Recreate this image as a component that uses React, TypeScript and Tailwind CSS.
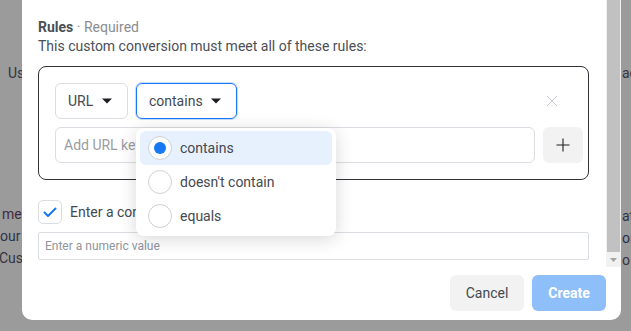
import React from "react";

function Caret() {
  return (
    <svg width="10" height="6" viewBox="0 0 10 6" className="shrink-0">
      <path d="M0 0.5 L10 0.5 L5 5.5 Z" fill="#1c1e21" />
    </svg>
  );
}

function Radio({ checked }: { checked?: boolean }) {
  return (
    <div className="w-[24px] h-[24px] rounded-full border border-[#ced0d4] bg-white flex items-center justify-center shrink-0">
      {checked && <div className="w-[12px] h-[12px] rounded-full bg-[#1877f2]" />}
    </div>
  );
}

export default function App() {
  return (
    <div className="relative w-[631px] h-[331px] overflow-hidden bg-[#9b9b9b] font-['Roboto','Noto_Sans',sans-serif]">
      {/* page text behind the overlay */}
      <div className="absolute left-[8px] top-[64px] text-[14px] leading-[19px] text-[#343440]">Us</div>
      <div className="absolute left-[622px] top-[64px] text-[14px] leading-[19px] text-[#343440]">ac</div>
      <div className="absolute left-[2px] top-[203px] text-[14px] leading-[22px] text-[#3f2c40]">me</div>
      <div className="absolute left-[0px] top-[225px] text-[14px] leading-[22px] text-[#2c3448]">our</div>
      <div className="absolute left-[-1px] top-[247px] text-[14px] leading-[22px] text-[#343440]">Cust</div>
      <div className="absolute left-[622px] top-[205px] text-[14px] leading-[22px] text-[#2c3448]">at</div>
      <div className="absolute left-[622px] top-[227px] text-[14px] leading-[22px] text-[#1f2f52]">or</div>
      <div className="absolute left-[622px] top-[249px] text-[14px] leading-[22px] text-[#343440]">o</div>

      {/* modal */}
      <div className="relative ml-[22px] w-[599px] h-[320px] bg-white rounded-b-[10px] flex flex-col">
        <div className="h-[267px] flex">
          <div className="flex-1 pl-4 pr-[17px] pt-[18px]">
            <div className="text-[14px] leading-[19px]">
              <span className="font-bold text-[#4b4f56]">Rules</span>
              <span className="text-[#8a8d91]"> · Required</span>
            </div>
            <div className="text-[14px] leading-[19px] text-[#4b4f56]">
              This custom conversion must meet all of these rules:
            </div>

            <div className="mt-[10px] border border-[#303338] rounded-lg pl-4 pr-[5px] py-4 flex flex-col gap-2">
              <div className="flex items-center h-[36px]">
                <div className="w-[73px] h-[36px] border border-[#dadde1] rounded-md flex items-center justify-between pl-3 pr-[15px] text-[14px] text-[#444950]">
                  <span>URL</span>
                  <Caret />
                </div>
                <div className="relative ml-2">
                  <div className="w-[101px] h-[36px] border border-[#1877f2] shadow-[0_0_0_1px_rgba(24,119,242,0.25)] rounded-md flex items-center justify-between pl-3 pr-[15px] text-[14px] text-[#444950]">
                    <span>contains</span>
                    <Caret />
                  </div>
                  {/* dropdown menu */}
                  <div className="absolute left-0 top-[45px] z-10 w-[200px] bg-white rounded-lg shadow-[0_3px_18px_rgba(0,0,0,0.16)] py-[3px] px-[4px] flex flex-col">
                    <div className="h-[34px] rounded-md bg-[#e7f0fd] flex items-center gap-2 pl-2 text-[14px] text-[#444950]">
                      <Radio checked />
                      <span>contains</span>
                    </div>
                    <div className="h-[34px] rounded-md flex items-center gap-2 pl-2 text-[14px] text-[#444950]">
                      <Radio />
                      <span>doesn't contain</span>
                    </div>
                    <div className="h-[34px] rounded-md flex items-center gap-2 pl-2 text-[14px] text-[#444950]">
                      <Radio />
                      <span>equals</span>
                    </div>
                  </div>
                </div>
                <div className="flex-1" />
                <div className="w-[20px] h-[20px] mr-[21px] flex items-center justify-center">
                  <svg width="12" height="12" viewBox="0 0 12 12">
                    <path d="M1 1 L11 11 M11 1 L1 11" stroke="#c4c7cb" strokeWidth="1" fill="none" />
                  </svg>
                </div>
              </div>
              <div className="flex gap-2 h-[36px]">
                <div className="flex-1 border border-[#dadde1] rounded-md flex items-center pl-2 text-[14px] text-[#9a9da2]">
                  Add URL keyword
                </div>
                <div className="w-[40px] h-[36px] rounded-md bg-[#f2f2f2] flex items-center justify-center">
                  <svg width="14" height="14" viewBox="0 0 14 14">
                    <path d="M7 0.5 V13.5 M0.5 7 H13.5" stroke="#1c1e21" strokeWidth="1.1" fill="none" />
                  </svg>
                </div>
              </div>
            </div>

            <div className="mt-[20px] flex items-center gap-2">
              <div className="w-[24px] h-[24px] border border-[#dadde1] rounded-[5px] flex items-center justify-center">
                <svg width="14" height="11" viewBox="0 0 14 11">
                  <path d="M1.5 5.5 L5 9 L12.5 1.5" stroke="#1877f2" strokeWidth="2" fill="none" strokeLinecap="round" strokeLinejoin="round" />
                </svg>
              </div>
              <span className="text-[14px] text-[#444950]">Enter a conversion value</span>
            </div>
            <div className="mt-2 h-[28px] border border-[#dadde1] rounded-[2px] flex items-center pl-[6px] text-[12px] text-[#90949c]">
              Enter a numeric value
            </div>
          </div>

          {/* scrollbar */}
          <div className="w-[15px] h-[267px] bg-[#f1f1f1] flex flex-col items-center">
            <div className="w-[13px] h-[252px] bg-[#c1c1c1]" />
            <div className="flex-1 flex items-center justify-center">
              <svg width="7" height="4" viewBox="0 0 7 4">
                <path d="M0 0 L7 0 L3.5 4 Z" fill="#a3a3a3" />
              </svg>
            </div>
          </div>
        </div>

        {/* footer */}
        <div className="h-[52px] flex items-center justify-end gap-2 pr-[15px]">
          <div className="w-[74px] h-[36px] rounded-md bg-[#f2f2f2] flex items-center justify-center text-[14px] text-[#444950]">
            Cancel
          </div>
          <div className="w-[74px] h-[36px] rounded-md bg-[#8fbff8] flex items-center justify-center text-[14px] font-bold text-white">
            Create
          </div>
        </div>
      </div>
    </div>
  );
}
